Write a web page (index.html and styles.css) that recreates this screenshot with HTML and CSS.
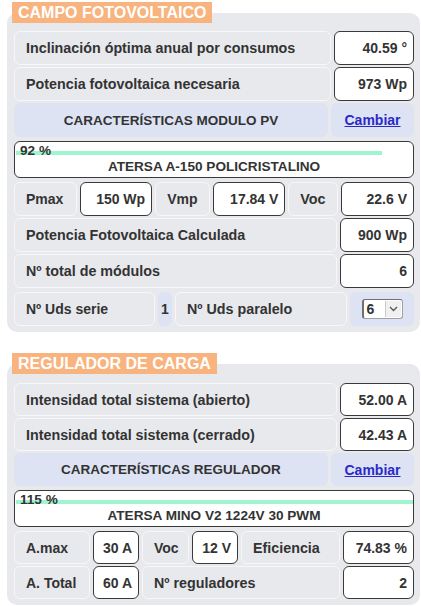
FILE: index.html
```html
<!DOCTYPE html>
<html lang="es">
<head>
<meta charset="utf-8">
<title>Campo fotovoltaico</title>
<link rel="stylesheet" href="styles.css">
</head>
<body>
<div class="page">
  <section class="section">
    <div class="tab">CAMPO FOTOVOLTAICO</div>
    <div class="panel">
      <div class="row">
        <div class="cell grow">Inclinación óptima anual por consumos</div>
        <div class="cell val w80">40.59 °</div>
      </div>
      <div class="row">
        <div class="cell grow">Potencia fotovoltaica necesaria</div>
        <div class="cell val w80">973 Wp</div>
      </div>
      <div class="row">
        <div class="cell hd grow">CARACTERÍSTICAS MODULO PV</div>
        <div class="cell hd link-cell w83"><a href="#">Cambiar</a></div>
      </div>
      <div class="prog">
        <div class="bar" style="width:92%"></div>
        <div class="pct">92 %</div>
        <div class="name">ATERSA A-150 POLICRISTALINO</div>
      </div>
      <div class="row sp">
        <div class="cell w63">Pmax</div>
        <div class="cell val w73">150 Wp</div>
        <div class="cell w55">Vmp</div>
        <div class="cell val w73">17.84 V</div>
        <div class="cell grow">Voc</div>
        <div class="cell val w74">22.6 V</div>
      </div>
      <div class="row">
        <div class="cell grow">Potencia Fotovoltaica Calculada</div>
        <div class="cell val w74">900 Wp</div>
      </div>
      <div class="row">
        <div class="cell grow">Nº total de módulos</div>
        <div class="cell val w74">6</div>
      </div>
      <div class="row sp">
        <div class="cell w141">Nº Uds serie</div>
        <div class="cell hd num">1</div>
        <div class="cell grow">Nº Uds paralelo</div>
        <div class="cell hd sel-cell">
          <span class="select"><span class="sel-val">6</span><span class="sel-btn"><svg width="9" height="6" viewBox="0 0 9 6"><path d="M1 1 L4.5 4.5 L8 1" fill="none" stroke="#555" stroke-width="1.3"/></svg></span></span>
        </div>
      </div>
    </div>
  </section>

  <section class="section second">
    <div class="tab">REGULADOR DE CARGA</div>
    <div class="panel compact">
      <div class="row">
        <div class="cell grow">Intensidad total sistema (abierto)</div>
        <div class="cell val w74">52.00 A</div>
      </div>
      <div class="row">
        <div class="cell grow">Intensidad total sistema (cerrado)</div>
        <div class="cell val w74">42.43 A</div>
      </div>
      <div class="row">
        <div class="cell hd grow">CARACTERÍSTICAS REGULADOR</div>
        <div class="cell hd link-cell w83"><a href="#">Cambiar</a></div>
      </div>
      <div class="prog">
        <div class="bar" style="width:115%"></div>
        <div class="pct">115 %</div>
        <div class="name">ATERSA MINO V2 1224V 30 PWM</div>
      </div>
      <div class="row sp">
        <div class="cell w76">A.max</div>
        <div class="cell val w46">30 A</div>
        <div class="cell w47">Voc</div>
        <div class="cell val w46">12 V</div>
        <div class="cell grow">Eficiencia</div>
        <div class="cell val w71">74.83 %</div>
      </div>
      <div class="row">
        <div class="cell w76">A. Total</div>
        <div class="cell val w46">60 A</div>
        <div class="cell grow">Nº reguladores</div>
        <div class="cell val w71">2</div>
      </div>
    </div>
  </section>
</div>
</body>
</html>
```

FILE: styles.css
```css
* { box-sizing: border-box; }
html, body { margin: 0; padding: 0; background: #ffffff; }
body {
  font-family: "Liberation Sans", Arial, sans-serif;
  color: #333333;
}
.page {
  padding: 2px 1px 0 7px;
  width: 421px;
}
.section { display: flex; flex-direction: column; }
.section.second { margin-top: 21px; }
.tab {
  align-self: flex-start;
  margin-left: 5px;
  height: 21px;
  line-height: 21px;
  padding: 0 6px;
  background: #f8b37e;
  color: #ffffff;
  font-weight: bold;
  font-size: 16px;
  position: relative;
  z-index: 1;
}
.panel {
  margin-top: -10px;
  background: #e8e9ed;
  border-radius: 10px;
  padding: 18px 6px 6px 7px;
  display: flex;
  flex-direction: column;
  gap: 2px;
}
.panel.compact { padding-top: 19px; }
.row {
  display: flex;
  gap: 3px;
  height: 34px;
}
.panel.compact .row { height: 33px; }
.row.sp { margin-top: 2px; }
.cell {
  display: flex;
  align-items: center;
  padding: 0 11px;
  border: 1px solid #f7f7f9;
  border-radius: 6px;
  background: #e8e9ed;
  font-weight: bold;
  font-size: 14px;
  white-space: nowrap;
}
.grow { flex: 1; font-size: 14.3px; }
.val {
  background: #ffffff;
  border: 1px solid #3a3a3a;
  justify-content: flex-end;
  padding: 0 6px;
  font-size: 14px;
}
.hd {
  background: #dee3f4;
  border-color: #dee3f4;
  justify-content: center;
  font-size: 13.5px;
}
.link-cell a {
  color: #2a2ac8;
  text-decoration: underline;
  font-size: 14px;
}
.num { width: 14px; padding: 0; font-size: 14px; }
.sel-cell { width: 64px; padding: 0; }
.w55 { width: 55px; }
.w63 { width: 63px; }
.w73 { width: 73px; }
.w74 { width: 74px; }
.w80 { width: 80px; }
.w83 { width: 83px; }
.w141 { width: 141px; }
.w76 { width: 76px; }
.w46 { width: 46px; }
.w47 { width: 47px; }
.w71 { width: 71px; }
.prog {
  position: relative;
  height: 37px;
  margin-top: 2px;
  background: #ffffff;
  border: 1px solid #3a3a3a;
  border-radius: 6px;
  overflow: hidden;
  padding: 1px 5px 0 5px;
  font-weight: bold;
  font-size: 13.6px;
}
.bar {
  position: absolute;
  left: 1px;
  top: 9px;
  height: 4px;
  background: #9ff5cf;
}
.pct {
  position: relative;
  line-height: 16px;
}
.name {
  position: relative;
  text-align: center;
  line-height: 16px;
}
.select {
  display: flex;
  align-items: stretch;
  width: 41px;
  height: 20px;
  background: #ffffff;
  border: 1px solid #a0a0a0;
  border-top-color: #707070;
  border-left-color: #707070;
  border-left-width: 2px;
  border-radius: 3px;
}
.sel-val {
  flex: 1;
  display: flex;
  align-items: center;
  padding-left: 3px;
  font-size: 14px;
  font-weight: bold;
}
.sel-btn {
  width: 16px;
  margin: 1px;
  display: flex;
  align-items: center;
  justify-content: center;
  background: #f0f0f0;
  border-left: 1px solid #c8c8c8;
}
```
